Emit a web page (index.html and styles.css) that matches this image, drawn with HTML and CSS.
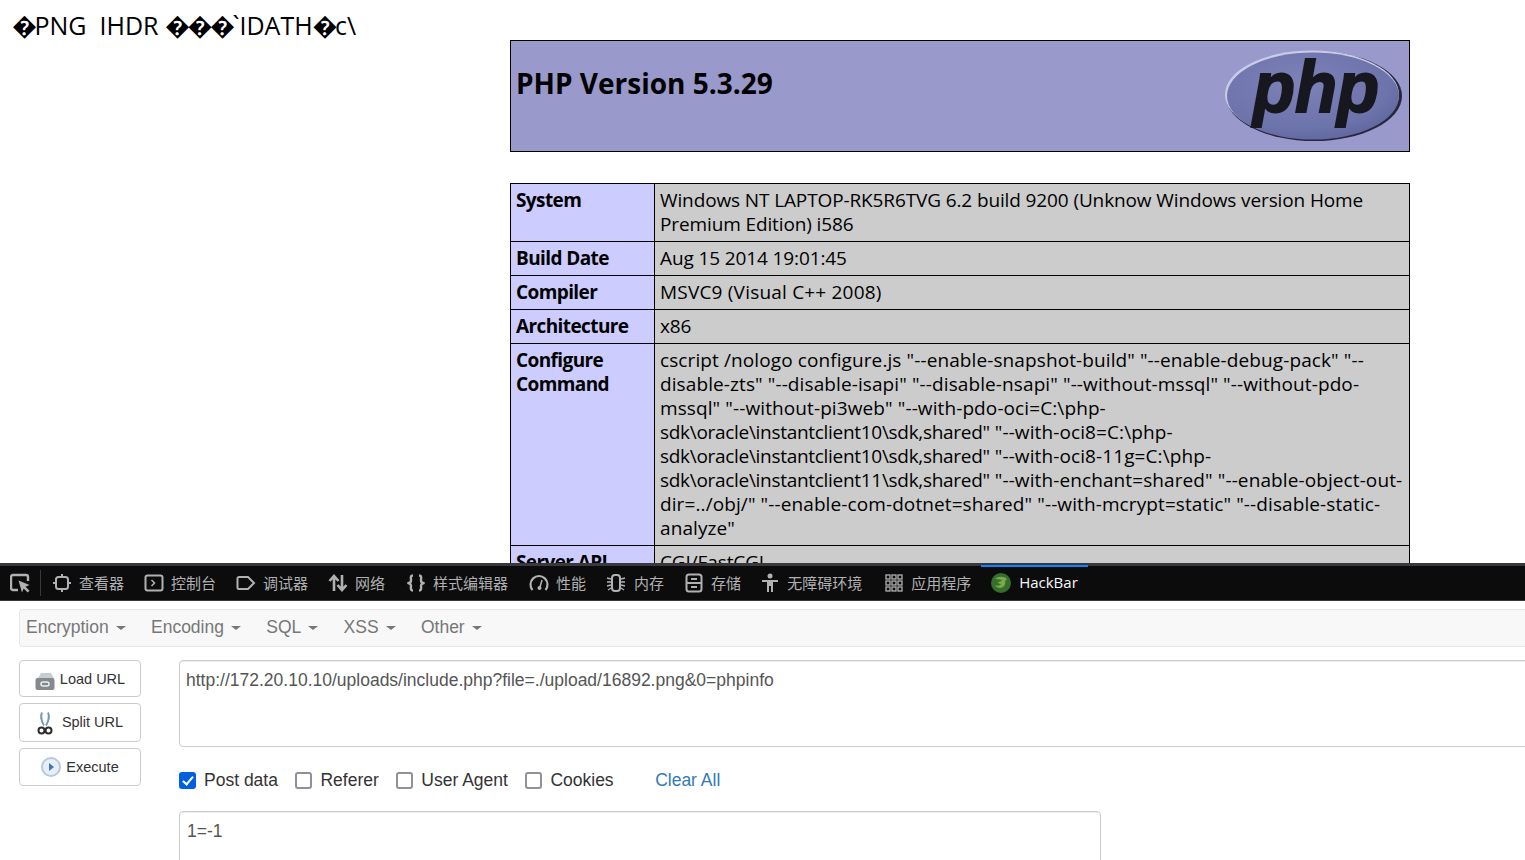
FILE: index.html
```html
<!DOCTYPE html>
<html lang="zh-CN">
<head>
<meta charset="utf-8">
<title>phpinfo()</title>
<link rel="stylesheet" href="styles.css">
</head>
<body>
<main class="page">
  <p class="binary"><span class="rep">�</span>PNG&nbsp;&nbsp;IHDR <span class="rep">���</span>`IDATH<span class="rep">�</span>c\</p>
  <table class="info head-table">
    <tr class="h">
      <td>
        <svg class="php-logo" viewBox="0 0 180 92" aria-label="PHP logo">
          <defs>
            <radialGradient id="egg" cx="42%" cy="35%" r="70%">
              <stop offset="0" stop-color="#7d82b8"/>
              <stop offset="0.75" stop-color="#6d73ab"/>
              <stop offset="1" stop-color="#5f659d"/>
            </radialGradient>
          </defs>
          <ellipse cx="90" cy="46" rx="88" ry="45" fill="#26263c"/>
          <ellipse cx="88" cy="44.500" rx="87" ry="44" fill="#c9cce6"/>
          <ellipse cx="89" cy="46" rx="86" ry="43.500" fill="url(#egg)"/>
          <text class="php-word" x="29" y="62" textLength="126" lengthAdjust="spacingAndGlyphs">php</text>
        </svg>
        <h1 class="version">PHP Version 5.3.29</h1>
      </td>
    </tr>
  </table>
  <table class="info">
    <tr><td class="e">System</td><td class="v">Windows NT LAPTOP-RK5R6TVG 6.2 build 9200 (Unknow Windows version Home<br>Premium Edition) i586</td></tr>
    <tr><td class="e">Build Date</td><td class="v">Aug 15 2014 19:01:45</td></tr>
    <tr><td class="e">Compiler</td><td class="v v-wide">MSVC9 (Visual C++ 2008)</td></tr>
    <tr><td class="e">Architecture</td><td class="v">x86</td></tr>
    <tr><td class="e">Configure<br>Command</td><td class="v v-config">cscript /nologo configure.js "--enable-snapshot-build" "--enable-debug-pack" "--<br>disable-zts" "--disable-isapi" "--disable-nsapi" "--without-mssql" "--without-pdo-<br>mssql" "--without-pi3web" "--with-pdo-oci=C:\php-<br><span class="sdk">sdk\oracle\instantclient10\sdk,shared"</span> "--with-oci8=C:\php-<br><span class="sdk">sdk\oracle\instantclient10\sdk,shared"</span> "--with-oci8-11g=C:\php-<br><span class="sdk">sdk\oracle\instantclient11\sdk,shared"</span> "--with-enchant=shared" "--enable-object-out-<br>dir=../obj/" "--enable-com-dotnet=shared" "--with-mcrypt=static" "--disable-static-<br>analyze"</td></tr>
    <tr><td class="e">Server API</td><td class="v">CGI/FastCGI</td></tr>
  </table>
</main>

<nav class="toolbar">
  <div class="picker">
    <svg class="ti" viewBox="0 0 20 20"><path d="M8 17H3A2 2 0 0 1 1 15V4A2 2 0 0 1 3 2h13a2 2 0 0 1 2 2v4" fill="none" stroke="#b1b1b3" stroke-width="2.400"/><path d="M8.500 7.500l11 4.500-4 1.800 4 4-1.800 1.800-4-4-1.700 4z" fill="#b1b1b3"/></svg>
  </div>
  <div class="tab">
    <svg class="ti" viewBox="0 0 20 20"><rect x="4" y="4" width="12" height="12" rx="2.500" fill="none" stroke="#b1b1b3" stroke-width="2"/><path d="M10 1v3M10 16v3M1 10h3M16 10h3" stroke="#b1b1b3" stroke-width="2"/></svg>
    <span>查看器</span>
  </div>
  <div class="tab">
    <svg class="ti" viewBox="0 0 20 20"><rect x="1.500" y="2.500" width="17" height="15" rx="2" fill="none" stroke="#b1b1b3" stroke-width="2"/><path d="M7.500 7l3 3-3 3" fill="none" stroke="#b1b1b3" stroke-width="1.500"/></svg>
    <span>控制台</span>
  </div>
  <div class="tab">
    <svg class="ti" viewBox="0 0 20 20"><path d="M3 4h9l6 6-6 6H3a1.500 1.500 0 0 1-1.500-1.500v-9A1.500 1.500 0 0 1 3 4z" fill="none" stroke="#b1b1b3" stroke-width="2"/></svg>
    <span>调试器</span>
  </div>
  <div class="tab tab-net">
    <svg class="ti" viewBox="0 0 20 20"><path d="M6 18V4M1.500 8L6 3l4.500 5M14 2v14M9.500 12l4.500 5 4.500-5" fill="none" stroke="#b1b1b3" stroke-width="2.600"/></svg>
    <span>网络</span>
  </div>
  <div class="tab tab-style">
    <svg class="ti" viewBox="0 0 20 20"><path d="M7 2.500C4 2.500 5 5 5 7.500S3.500 10 2.500 10 5 10.500 5 12.500 4 17.500 7 17.500M13 2.500C16 2.500 15 5 15 7.500s1.500 2.500 2.500 2.500S15 10.500 15 12.500s1 5-2 5" fill="none" stroke="#b1b1b3" stroke-width="2.400"/></svg>
    <span>样式编辑器</span>
  </div>
  <div class="tab">
    <svg class="ti" viewBox="0 0 20 20"><path d="M3.500 17A8.500 8.500 0 1 1 16.500 17" fill="none" stroke="#b1b1b3" stroke-width="2.200"/><path d="M13 7l-2 7" stroke="#b1b1b3" stroke-width="1.500"/><circle cx="10.500" cy="15" r="2" fill="#b1b1b3"/></svg>
    <span>性能</span>
  </div>
  <div class="tab tab-mem">
    <svg class="ti" viewBox="0 0 20 20"><rect x="6" y="2" width="8" height="16" rx="3" fill="none" stroke="#b1b1b3" stroke-width="2"/><path d="M1 5l4 1M1 9h4M1 13l4-1M2 17l3-2M19 5l-4 1M19 9h-4M19 13l-4-1M18 17l-3-2" stroke="#b1b1b3" stroke-width="1.300"/></svg>
    <span>内存</span>
  </div>
  <div class="tab tab-store">
    <svg class="ti" viewBox="0 0 20 20"><rect x="2.500" y="1.500" width="15" height="17" rx="2.500" fill="none" stroke="#b1b1b3" stroke-width="2"/><path d="M2.500 10h15M7 6h6M7 14h6" stroke="#b1b1b3" stroke-width="1.800"/></svg>
    <span>存储</span>
  </div>
  <div class="tab tab-a11y">
    <svg class="ti" viewBox="0 0 20 20"><circle cx="10" cy="3" r="2.500" fill="#b1b1b3"/><path d="M2 7h16v2h-5v10h-2v-6H9v6H7V9H2z" fill="#b1b1b3"/></svg>
    <span>无障碍环境</span>
  </div>
  <div class="tab">
    <svg class="ti" viewBox="0 0 20 20"><g fill="none" stroke="#b1b1b3" stroke-width="1.300"><rect x="2" y="2" width="4" height="4"/><rect x="8" y="2" width="4" height="4"/><rect x="14" y="2" width="4" height="4"/><rect x="2" y="8" width="4" height="4"/><rect x="8" y="8" width="4" height="4"/><rect x="14" y="8" width="4" height="4"/><rect x="2" y="14" width="4" height="4"/><rect x="8" y="14" width="4" height="4"/><rect x="14" y="14" width="4" height="4"/></g></svg>
    <span>应用程序</span>
  </div>
  <div class="tab tab-active">
    <svg class="ti" viewBox="0 0 20 20"><circle cx="10" cy="10" r="10" fill="#356f2b"/><path d="M4 6c3-3 9-3 12 0l-2 2c1 3-1 7-5 7-2 0-4-1-5-3 2 1 5 1 6-1-2 0-3-1-3-2 2 0 3-1 4-2-3-1-5-1-7-1z" fill="#79a94a"/></svg>
    <span>HackBar</span>
  </div>
</nav>

<section class="hackbar">
  <div class="menu">
    <span class="menu-item">Encryption<i class="caret"></i></span>
    <span class="menu-item">Encoding<i class="caret"></i></span>
    <span class="menu-item">SQL<i class="caret"></i></span>
    <span class="menu-item">XSS<i class="caret"></i></span>
    <span class="menu-item">Other<i class="caret"></i></span>
  </div>
  <div class="work">
    <div class="actions">
      <button class="btn btn-load" type="button">
        <svg class="bi bi-load" viewBox="0 0 20 20"><path d="M3 7l3-5h10l3 5z" fill="#c9cdd1"/><rect x="0.500" y="7" width="19" height="12" rx="2" fill="#85898e"/><rect x="6" y="11" width="8" height="4" rx="2" fill="none" stroke="#eceff1" stroke-width="1.500"/></svg>
        Load URL
      </button>
      <button class="btn btn-split" type="button">
        <svg class="bi bi-split" viewBox="0 0 16 24"><path d="M5 1.500c-2 4-.5 9 2 13M11 1.500c2 4 .5 9-2 13" fill="#b9d0e0" stroke="#6f95b2" stroke-width="1.800"/><circle cx="4.500" cy="19.500" r="3" fill="none" stroke="#2d2d2d" stroke-width="2"/><circle cx="11.500" cy="19.500" r="3" fill="none" stroke="#2d2d2d" stroke-width="2"/></svg>
        Split URL
      </button>
      <button class="btn btn-exec" type="button">
        <svg class="bi bi-exec" viewBox="0 0 20 20"><circle cx="10" cy="10" r="9" fill="#e6eef7" stroke="#b6c9de" stroke-width="2"/><path d="M8 6l5 4-5 4z" fill="#3f78b5"/></svg>
        Execute
      </button>
    </div>
    <div class="fields">
      <textarea class="url" spellcheck="false">http://172.20.10.10/uploads/include.php?file=./upload/16892.png&amp;0=phpinfo</textarea>
      <div class="opts">
        <label class="opt"><input class="check" type="checkbox" checked> Post data</label>
        <label class="opt"><input class="check" type="checkbox"> Referer</label>
        <label class="opt"><input class="check" type="checkbox"> User Agent</label>
        <label class="opt"><input class="check" type="checkbox"> Cookies</label>
        <a class="clear" href="#">Clear All</a>
      </div>
      <textarea class="post" spellcheck="false">1=-1</textarea>
    </div>
  </div>
</section>
</body>
</html>
```

FILE: styles.css
```css
html, body {
  margin: 0;
  height: 860px;
  overflow: hidden;
  background: #fff;
}

.page {
  height: 563px;
  overflow: hidden;
  font-family: "Open Sans", "DejaVu Sans", sans-serif;
  font-size: 19px;
  color: #000;
}

.binary {
  margin: 0;
  padding: 8px 0 0 12px;
  height: 32px;
  font-size: 25px;
  line-height: 34px;
  white-space: nowrap;
}

.rep {
  letter-spacing: -2.500px;
}

.info {
  width: 900px;
  margin: 0 0 31px 510px;
  border-collapse: collapse;
  table-layout: fixed;
  line-height: 24px;
}

.info td {
  border: 1px solid #000;
  padding: 4px 5px 5px;
  vertical-align: top;
  white-space: nowrap;
}

.head-table {
  height: 112px;
}

.h td {
  background: #9999cc;
}

.version {
  margin: 0;
  padding-top: 19px;
  font-size: 28px;
  line-height: 38px;
  font-weight: 700;
}

.php-logo {
  float: right;
  width: 180px;
  height: 92px;
  margin: 5px 0 0 0;
}

.php-word {
  font-family: "Liberation Sans", sans-serif;
  font-size: 72px;
  font-style: italic;
  font-weight: 700;
  fill: #17171f;
  stroke: #17171f;
  stroke-width: 2px;
}

.e {
  width: 133px;
  background: #ccccff;
  font-weight: 700;
  letter-spacing: -0.6px;
}

.v {
  background: #cccccc;
  letter-spacing: -0.12px;
}

.v-wide {
  letter-spacing: 0.2px;
}

.v-config {
  letter-spacing: 0.1px;
}

.sdk {
  letter-spacing: -0.3px;
}

.toolbar {
  box-sizing: border-box;
  height: 38px;
  display: flex;
  align-items: center;
  background: #0c0c0d;
  border-top: 3px solid #38383d;
  border-bottom: 1px solid #38383d;
  padding-left: 10px;
  font-family: "Noto Sans CJK SC", sans-serif;
  font-size: 15px;
  color: #b1b1b3;
}

.picker {
  display: flex;
  align-items: center;
  height: 26px;
  padding-right: 10px;
  border-right: 1px solid #38383d;
  margin-right: 1px;
}

.tab {
  display: flex;
  align-items: center;
  gap: 7px;
  height: 100%;
  padding: 0 10px;
  white-space: nowrap;
}

.tab span {
  padding-bottom: 2px;
}

.tab-net,
.tab-style {
  padding-right: 11px;
}

.tab-mem {
  gap: 8px;
  padding-right: 10px;
}

.tab-store {
  padding-right: 9px;
}

.tab-a11y {
  padding-right: 12px;
}

.tab-active {
  gap: 8px;
  color: #f9f9fa;
  font-family: "Open Sans", sans-serif;
  box-shadow: inset 0 2px 0 #0a84ff;
  margin-top: -1px;
  height: calc(100% + 1px);
}

.ti {
  width: 20px;
  height: 20px;
  flex: none;
}

.hackbar {
  padding: 8px 0 0 19px;
  font-family: "Liberation Sans", sans-serif;
  color: #333;
  background: #fff;
  height: 251px;
  overflow: hidden;
}

.menu {
  box-sizing: border-box;
  width: 1600px;
  height: 38px;
  display: flex;
  align-items: center;
  gap: 25.300px;
  padding: 0 0 2px 6px;
  margin-bottom: 13px;
  background: #f8f8f8;
  border: 1px solid #e7e7e7;
  border-radius: 4px;
  font-size: 17.5px;
  color: #777;
}

.menu-item {
  white-space: nowrap;
}

.caret {
  display: inline-block;
  margin-left: 7px;
  vertical-align: middle;
  border-top: 4px solid #777;
  border-left: 5px solid transparent;
  border-right: 5px solid transparent;
}

.work {
  display: flex;
  gap: 38px;
}

.actions {
  display: flex;
  flex-direction: column;
  gap: 6px;
  width: 122px;
  flex: none;
}

.btn {
  box-sizing: border-box;
  height: 38px;
  display: flex;
  align-items: center;
  justify-content: center;
  gap: 5px;
  background: #fff;
  border: 1px solid #ccc;
  border-radius: 4px;
  font-family: "Liberation Sans", sans-serif;
  font-size: 14.5px;
  color: #333;
  padding: 0;
}

.btn-load {
  height: 37px;
}

.btn-split {
  height: 39px;
  padding-bottom: 2px;
}

.bi {
  flex: none;
}

.bi-load {
  width: 20px;
  height: 20px;
  margin-top: 4px;
}

.bi-split {
  width: 16px;
  height: 24px;
  margin: 3px 4px 0 0;
}

.bi-exec {
  width: 20px;
  height: 20px;
}

.fields {
  flex: none;
  width: 1400px;
}

.url,
.post {
  display: block;
  box-sizing: border-box;
  padding: 6px 6px;
  border: 1px solid #ccc;
  border-radius: 4px;
  background: #fff;
  font-family: "Liberation Sans", sans-serif;
  font-size: 17.5px;
  line-height: 26px;
  color: #555;
  resize: none;
  outline: none;
  box-shadow: inset 0 1px 1px rgba(0, 0, 0, .075);
}

.url {
  width: 1400px;
  height: 87px;
}

.post {
  width: 922px;
  height: 80px;
  padding-left: 7px;
}

.opts {
  display: flex;
  align-items: center;
  height: 24px;
  margin: 21px 0 19px;
  font-size: 17.5px;
  color: #333;
}

.opt {
  display: flex;
  align-items: center;
  gap: 8px;
  margin-right: 17.500px;
  white-space: nowrap;
}

.check {
  appearance: none;
  box-sizing: border-box;
  width: 17px;
  height: 17px;
  margin: 0;
  border: 2px solid #8f8f9d;
  border-radius: 3px;
  background: #fff;
  position: relative;
}

.check:checked {
  background: #0060df;
  border-color: #0060df;
}

.check:checked::after {
  content: "";
  position: absolute;
  left: 3.500px;
  top: 0;
  width: 4px;
  height: 9px;
  border: solid #fff;
  border-width: 0 2.500px 2.500px 0;
  transform: rotate(40deg);
}

.clear {
  margin-left: 24px;
  color: #337ab7;
  text-decoration: none;
  white-space: nowrap;
}
```
